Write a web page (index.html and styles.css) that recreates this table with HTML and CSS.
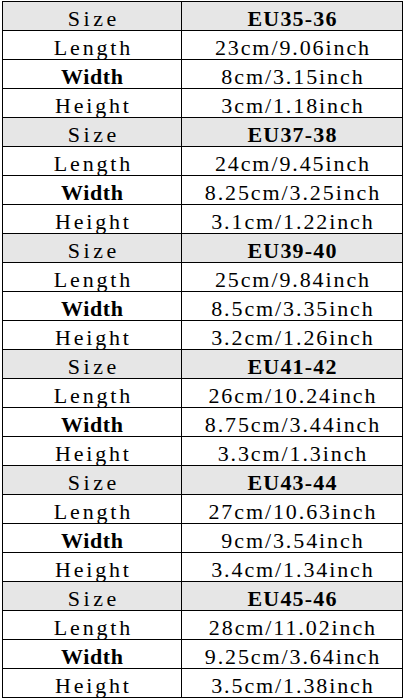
FILE: index.html
```html
<!DOCTYPE html>
<html>
<head>
<meta charset="utf-8">
<link rel="stylesheet" href="styles.css">
</head>
<body>
<div class="page">
  <div class="chart">
    <div class="cell head label size">Size</div><div class="cell head value bold">EU35-36</div>
    <div class="cell label">Length</div><div class="cell value">23cm/9.06inch</div>
    <div class="cell label bold">Width</div><div class="cell value">8cm/3.15inch</div>
    <div class="cell label">Height</div><div class="cell value">3cm/1.18inch</div>

    <div class="cell head label size">Size</div><div class="cell head value bold">EU37-38</div>
    <div class="cell label">Length</div><div class="cell value">24cm/9.45inch</div>
    <div class="cell label bold">Width</div><div class="cell value">8.25cm/3.25inch</div>
    <div class="cell label">Height</div><div class="cell value">3.1cm/1.22inch</div>

    <div class="cell head label size">Size</div><div class="cell head value bold">EU39-40</div>
    <div class="cell label">Length</div><div class="cell value">25cm/9.84inch</div>
    <div class="cell label bold">Width</div><div class="cell value">8.5cm/3.35inch</div>
    <div class="cell label">Height</div><div class="cell value">3.2cm/1.26inch</div>

    <div class="cell head label size">Size</div><div class="cell head value bold">EU41-42</div>
    <div class="cell label">Length</div><div class="cell value">26cm/10.24inch</div>
    <div class="cell label bold">Width</div><div class="cell value">8.75cm/3.44inch</div>
    <div class="cell label">Height</div><div class="cell value">3.3cm/1.3inch</div>

    <div class="cell head label size">Size</div><div class="cell head value bold">EU43-44</div>
    <div class="cell label">Length</div><div class="cell value">27cm/10.63inch</div>
    <div class="cell label bold">Width</div><div class="cell value">9cm/3.54inch</div>
    <div class="cell label">Height</div><div class="cell value">3.4cm/1.34inch</div>

    <div class="cell head label size">Size</div><div class="cell head value bold">EU45-46</div>
    <div class="cell label">Length</div><div class="cell value">28cm/11.02inch</div>
    <div class="cell label bold">Width</div><div class="cell value">9.25cm/3.64inch</div>
    <div class="cell label">Height</div><div class="cell value">3.5cm/1.38inch</div>
  </div>
</div>
</body>
</html>
```
FILE: styles.css
```css
html, body {
  margin: 0;
  padding: 0;
  background: #ffffff;
}
.page {
  padding: 1px 0 0 2px;
}
.chart {
  display: grid;
  grid-template-columns: 178px 220px;
  grid-auto-rows: 28px;
  gap: 1px;
  padding: 1px;
  width: max-content;
  background: #000000;
}
.cell {
  background: #ffffff;
  display: flex;
  align-items: flex-end;
  justify-content: center;
  font-family: "Liberation Serif", "DejaVu Serif", serif;
  font-size: 22px;
  line-height: 23px;
  color: #000000;
  white-space: nowrap;
  overflow: hidden;
}
.cell.head {
  background: #e6e6e6;
}
.label {
  letter-spacing: 2.8px;
  padding-left: 2.8px;
}
.label.size {
  letter-spacing: 3.6px;
  padding-left: 3.6px;
}
.label.bold {
  letter-spacing: 0.6px;
  padding-left: 0.6px;
}
.value {
  letter-spacing: 1.9px;
  padding-left: 1.9px;
}
.value.bold {
  letter-spacing: 1.2px;
  padding-left: 1.2px;
}
.bold {
  font-weight: bold;
}
```
